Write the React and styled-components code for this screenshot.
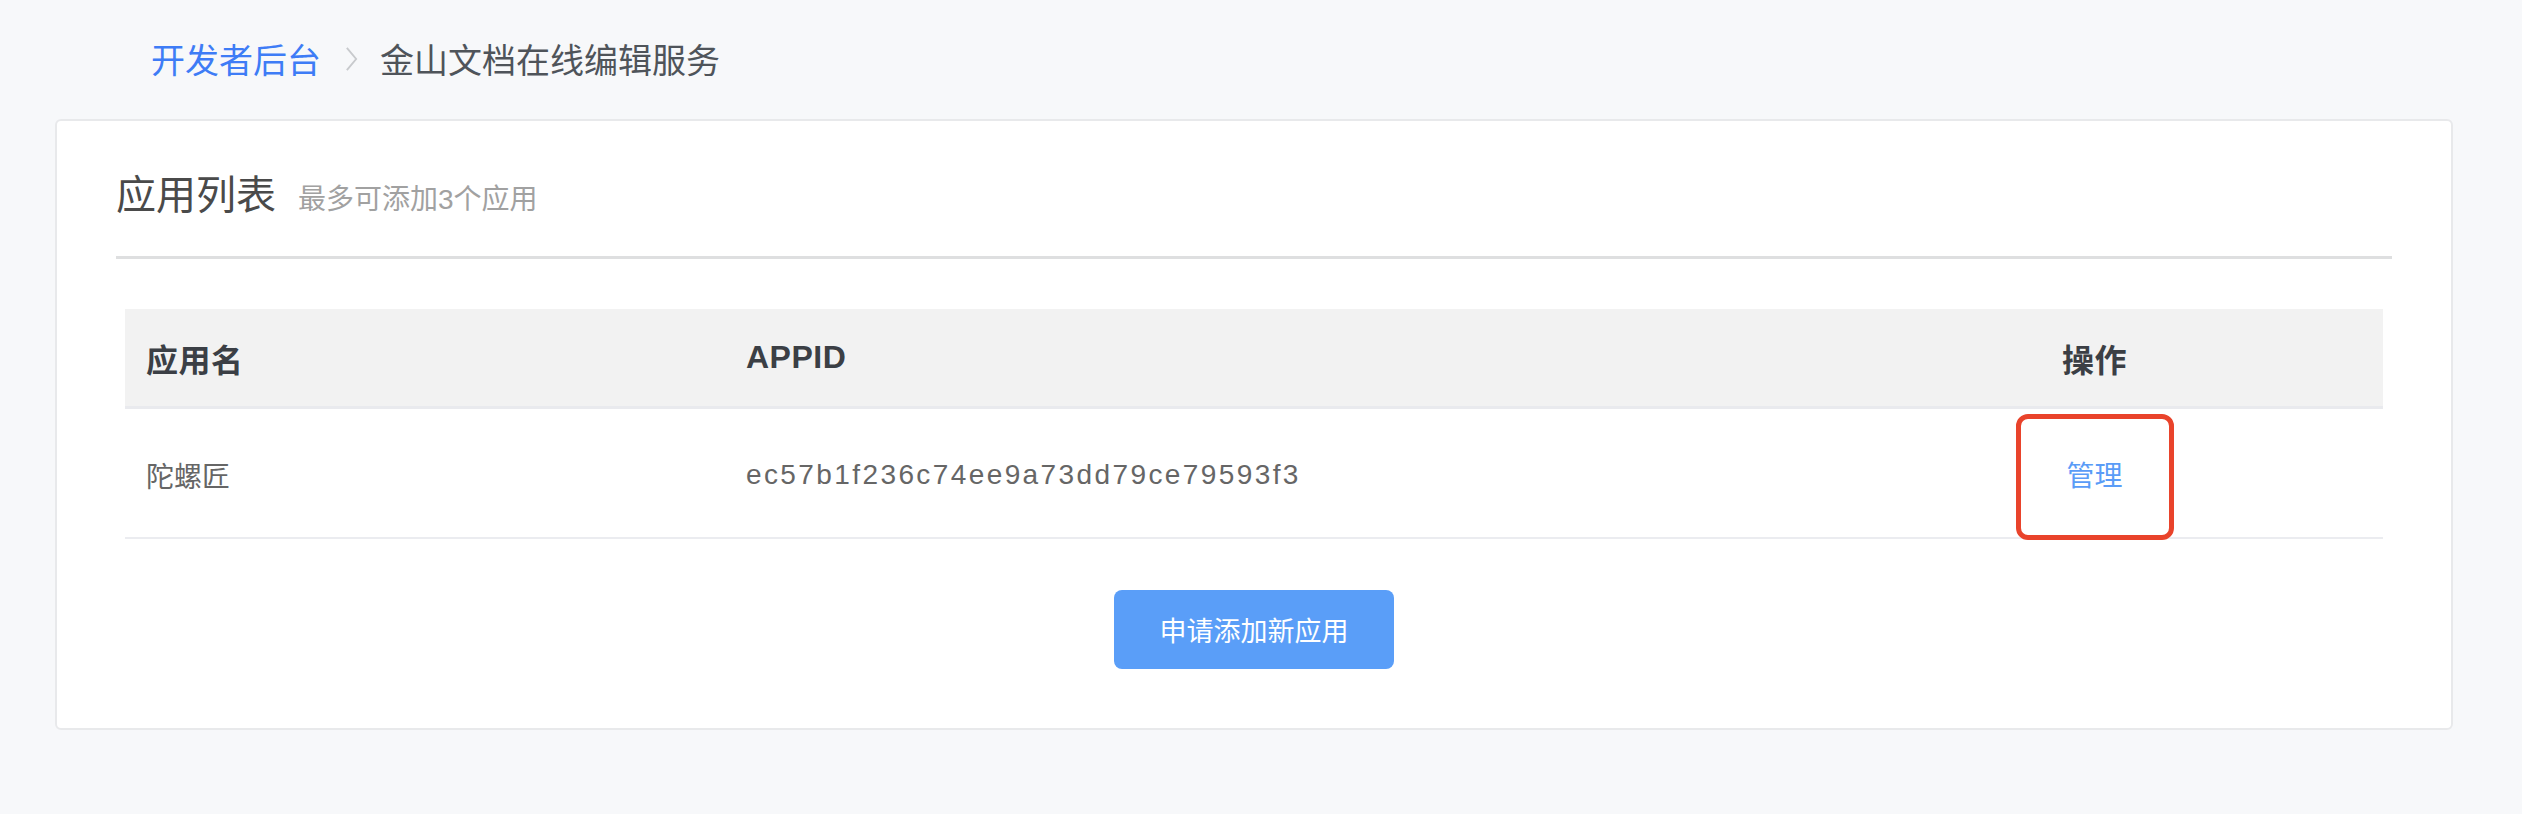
import React from "react";
import styled, { createGlobalStyle } from "styled-components";

const GlobalStyle = createGlobalStyle`
  html, body {
    margin: 0;
    padding: 0;
    background: #f7f8fa;
  }
  body {
    font-family: "Liberation Sans", "Noto Sans CJK SC", sans-serif;
  }
`;

const apps = [{ name: "陀螺匠", appId: "ec57b1f236c74ee9a73dd79ce79593f3" }];

const App = () => {
  return (
    <Page>
      <GlobalStyle />
      <Breadcrumb>
        <CrumbLink>开发者后台</CrumbLink>
        <Chevron viewBox="0 0 14 28">
          <path d="M2 2 L12 14 L2 26" />
        </Chevron>
        <CrumbCurrent>金山文档在线编辑服务</CrumbCurrent>
      </Breadcrumb>

      <Card>
        <CardHeader>
          <CardTitle>应用列表</CardTitle>
          <CardHint>最多可添加3个应用</CardHint>
        </CardHeader>

        <Table>
          <HeadRow>
            <HeadCell>应用名</HeadCell>
            <HeadCell>APPID</HeadCell>
            <HeadCell center>操作</HeadCell>
          </HeadRow>
          {apps.map((app) => (
            <BodyRow key={app.appId}>
              <BodyCell>{app.name}</BodyCell>
              <AppIdCell>{app.appId}</AppIdCell>
              <ActionCell>
                <Highlight>
                  <ManageLink>管理</ManageLink>
                </Highlight>
              </ActionCell>
            </BodyRow>
          ))}
        </Table>

        <ButtonRow>
          <PrimaryButton>申请添加新应用</PrimaryButton>
        </ButtonRow>
      </Card>
    </Page>
  );
};

const Page = styled.div`
  min-height: 814px;
  padding: 0 69px 0 55px;
  box-sizing: border-box;
`;

const Breadcrumb = styled.div`
  height: 119px;
  display: flex;
  align-items: center;
  padding-left: 96px;
  padding-bottom: 2px;
  box-sizing: border-box;
  font-size: 34px;
`;

const CrumbLink = styled.span`
  color: #3e7cf6;
  cursor: pointer;
`;

const Chevron = styled.svg`
  width: 13px;
  height: 28px;
  margin: 0 22px 0 24px;
  fill: none;
  stroke: #c8cacd;
  stroke-width: 2;
`;

const CrumbCurrent = styled.span`
  color: #4f545a;
`;

const Card = styled.div`
  background: #ffffff;
  border: 2px solid #e8e9eb;
  border-radius: 6px;
  height: 611px;
  box-sizing: border-box;
  padding: 0 59px;
`;

const CardHeader = styled.div`
  display: flex;
  align-items: baseline;
  gap: 22px;
  padding-top: 50px;
  padding-bottom: 37px;
  border-bottom: 3px solid #dedfe0;
`;

const CardTitle = styled.span`
  font-size: 40px;
  line-height: 48px;
  color: #4a4a4a;
`;

const CardHint = styled.span`
  font-size: 28px;
  color: #a1a1a1;
`;

const Table = styled.div`
  margin: 50px 9px 0;
`;

const HeadRow = styled.div`
  display: grid;
  grid-template-columns: 600px 1081px 1fr;
  height: 100px;
  box-sizing: border-box;
  background: #f2f2f2;
  border-bottom: 3px solid #e9eaee;
`;

const HeadCell = styled.div`
  display: flex;
  align-items: center;
  justify-content: ${(p) => (p.center ? "center" : "flex-start")};
  padding: ${(p) => (p.center ? "0" : "0 21px")};
  font-size: 32px;
  font-weight: 700;
  letter-spacing: 0.5px;
  color: #3b3f45;
`;

const BodyRow = styled.div`
  display: grid;
  grid-template-columns: 600px 1081px 1fr;
  height: 130px;
  box-sizing: border-box;
  border-bottom: 2px solid #ebecf0;
`;

const BodyCell = styled.div`
  display: flex;
  align-items: center;
  padding: 0 21px;
  font-size: 28px;
  color: #666666;
`;

const AppIdCell = styled(BodyCell)`
  letter-spacing: 2.4px;
`;

const ActionCell = styled.div`
  display: flex;
  justify-content: center;
  align-items: flex-start;
  padding-top: 5px;
`;

const Highlight = styled.div`
  width: 158px;
  height: 126px;
  box-sizing: border-box;
  border: 5px solid #e9432b;
  border-radius: 12px;
  display: flex;
  align-items: center;
  justify-content: center;
  padding-bottom: 6px;
`;

const ManageLink = styled.span`
  font-size: 28px;
  color: #5a9cf7;
  cursor: pointer;
`;

const ButtonRow = styled.div`
  display: flex;
  justify-content: center;
  padding-top: 51px;
`;

const PrimaryButton = styled.button`
  width: 280px;
  height: 79px;
  border: none;
  border-radius: 8px;
  background: #5a9ef8;
  color: #ffffff;
  font-family: "Liberation Sans", "Noto Sans CJK SC", sans-serif;
  font-size: 27px;
  cursor: pointer;
`;

export default App;
